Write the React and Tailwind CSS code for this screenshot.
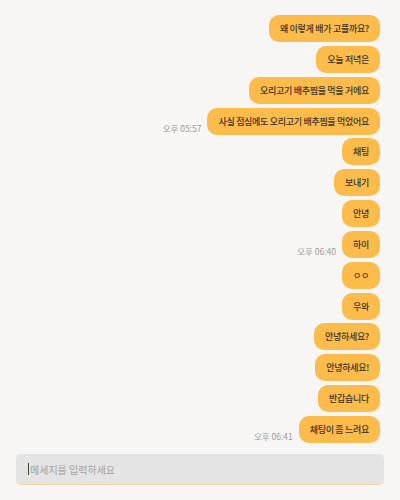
import React from 'react';

const messages = [
  { text: '왜 이렇게 배가 고플까요?' },
  { text: '오늘 저녁은' },
  { text: '오리고기 배추찜을 먹을 거에요' },
  { text: '사실 점심에도 오리고기 배추찜을 먹었어요', time: '오후 05:57' },
  { text: '채팅' },
  { text: '보내기' },
  { text: '안녕' },
  { text: '하이', time: '오후 06:40' },
  { text: 'ㅇㅇ' },
  { text: '우와' },
  { text: '안녕하세요?' },
  { text: '안녕하세요!' },
  { text: '반갑습니다' },
  { text: '채팅이 좀 느려요', time: '오후 06:41' },
];

const App = () => {
  return (
    <div
      className="w-full h-[500px] bg-[#f7f6f4] flex flex-col"
      style={{ fontFamily: '"Noto Sans CJK KR", "Noto Sans", sans-serif' }}
    >
      {/* Message list */}
      <div className="flex flex-col items-end gap-[3.85px] pt-[15px] pr-[20px] flex-1">
        {messages.map((m, i) => (
          <div key={i} className="flex items-end gap-[6px]">
            {m.time && (
              <span className="text-[8.5px] leading-[10px] text-[#9b9b9b] mb-[2px]">{m.time}</span>
            )}
            <div className="h-[27px] flex items-center bg-[#fbbc4c] text-[#3b3226] text-[9px] tracking-[-0.3px] leading-[13px] font-medium rounded-[10px] px-[11px]">
              {m.text}
            </div>
          </div>
        ))}
      </div>
      {/* Input */}
      <div className="px-[16px] pb-[15px]">
        <div className="h-[31px] bg-[#e4e4e4] rounded-[5px] border-b border-[#f1d6a4] flex items-center px-[12px]">
          <span className="w-px h-[12px] bg-[#444] mr-[1px]" />
          <span className="text-[10px] text-[#a3a3a3]">메세지를 입력하세요</span>
        </div>
      </div>
    </div>
  );
};

export default App;
